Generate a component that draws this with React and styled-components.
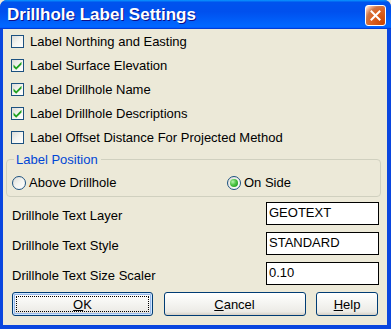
import React from "react";
import styled, { createGlobalStyle } from "styled-components";

const Global = createGlobalStyle`
  html, body { margin: 0; padding: 0; background: #ECE9D8; }
  body { font-family: "Liberation Sans", Arial, sans-serif; font-size: 13px; }
  * { box-sizing: border-box; }
`;

const Window = styled.div`
  width: 391px;
  height: 329px;
  display: flex;
  flex-direction: column;
  background: #0A46DF;
  padding: 0 4px 4px 3px;
  border-radius: 7px 7px 0 0;
  overflow: hidden;
`;

const TitleBar = styled.div`
  height: 29px;
  margin: 0 -4px 0 -3px;
  padding: 0 5px 0 7px;
  display: flex;
  align-items: center;
  justify-content: space-between;
  background: linear-gradient(180deg, #0997ff, #0053ee 8%, #0050ee 40%, #06f 88%, #06f 93%, #005bff 95%, #003dd7 96%, #003dd7);
`;

const Title = styled.div`
  color: #fff;
  font-family: "Liberation Sans", Arial, sans-serif;
  font-weight: bold;
  font-size: 17px;
  text-shadow: 1px 1px #0f1089;
  padding-top: 1px;
`;

const CloseButton = styled.div`
  width: 21px;
  height: 21px;
  border: 1px solid #fff;
  border-radius: 3px;
  background: radial-gradient(circle at 90% 90%, #cc4600 0%, #dc6527 55%, #cd7546 70%, #ffccb2 90%, #fff 100%);
  display: flex;
  align-items: center;
  justify-content: center;
  margin-top: 1px;
`;

const Client = styled.div`
  flex: 1;
  background: #ECE9D8;
  padding: 0 8px 0 8px;
  display: flex;
  flex-direction: column;
`;

const CheckRow = styled.label`
  height: 24px;
  display: flex;
  align-items: center;
  gap: 6px;
  color: #000;
  white-space: nowrap;
`;

const CheckBox = styled.span`
  width: 13px;
  height: 13px;
  border: 1px solid #1c5180;
  background: linear-gradient(135deg, #dcdcd7 0%, #f4f4f0 50%, #ffffff 100%);
  display: flex;
  align-items: center;
  justify-content: center;
  flex: none;
`;

const Group = styled.fieldset`
  margin: 3px -2px 0 -5px;
  padding: 2px 5px 0 5px;
  border: 1px solid #d0d0bf;
  border-radius: 4px;
  min-width: 0;
`;

const Legend = styled.legend`
  color: #0046d5;
  padding: 0 3px 0 2px;
  margin-left: 2px;
  line-height: 15px;
`;

const RadioRow = styled.div`
  height: 27px;
  display: flex;
  align-items: center;
`;

const RadioLabel = styled.label`
  display: flex;
  align-items: center;
  gap: 3px;
  width: ${(p) => (p.$width ? `${p.$width}px` : "auto")};
  flex: none;
  white-space: nowrap;
`;

const RadioCircle = styled.span`
  width: 14px;
  height: 14px;
  border-radius: 50%;
  border: 1px solid #1c5180;
  background: linear-gradient(135deg, #dcdcd7 0%, #f4f4f0 50%, #ffffff 100%);
  display: flex;
  align-items: center;
  justify-content: center;
  flex: none;
`;

const RadioDot = styled.span`
  width: 8px;
  height: 8px;
  border-radius: 50%;
  background: radial-gradient(circle at 35% 35%, #b8f5b0 0%, #55c84c 40%, #21a121 80%, #1a8a1a 100%);
`;

const FieldRow = styled.div`
  height: 23px;
  margin-top: ${(p) => p.$top}px;
  display: flex;
  align-items: center;
  justify-content: space-between;
  padding-left: 1px;
`;

const FieldLabel = styled.span`
  color: #000;
  padding-top: 3px;
`;

const TextBox = styled.div`
  width: 113px;
  height: 23px;
  border: 1px solid #000;
  background: #fff;
  padding: 1px 0 0 2px;
  color: #000;
  line-height: 17px;
`;

const ButtonRow = styled.div`
  margin-top: 7px;
  padding: 0 1px;
  display: flex;
  justify-content: space-between;
`;

const Button = styled.div`
  width: ${(p) => p.$width}px;
  height: 24px;
  border: 1px solid #003c74;
  border-radius: 3px;
  background: linear-gradient(180deg, #ffffff 0%, #f6f6f3 40%, #ecebe6 85%, #d6d0c5 100%);
  box-shadow: ${(p) =>
    p.$default ? "inset 0 0 0 1px #cee7ff, inset 0 0 0 2px #98b8ea" : "none"};
  display: flex;
  align-items: center;
  justify-content: center;
  color: #000;
  position: relative;
`;

const FocusRing = styled.span`
  position: absolute;
  inset: 3px;
  border: 1px dotted #000;
  border-radius: 1px;
  pointer-events: none;
`;

const U = styled.span`
  text-decoration: underline;
`;

const Check = () => (
  <svg width="11" height="11" viewBox="0 0 11 11">
    <path d="M1.5 4.5 L4.2 7.2 L9.5 1.8 L9.5 4.6 L4.2 9.8 L1.5 7.2 Z" fill="#21a121" />
  </svg>
);

const checks = [
  { label: "Label Northing and Easting", on: false },
  { label: "Label Surface Elevation", on: true },
  { label: "Label Drillhole Name", on: true },
  { label: "Label Drillhole Descriptions", on: true },
  { label: "Label Offset Distance For Projected Method", on: false },
];

const fields = [
  { label: "Drillhole Text Layer", value: "GEOTEXT" },
  { label: "Drillhole Text Style", value: "STANDARD" },
  { label: "Drillhole Text Size Scaler", value: "0.10" },
];

export default function App() {
  return (
    <>
      <Global />
      <Window>
        <TitleBar>
          <Title>Drillhole Label Settings</Title>
          <CloseButton>
            <svg width="11" height="11" viewBox="0 0 11 11">
              <path d="M1.5 1.5 L9.5 9.5 M9.5 1.5 L1.5 9.5" stroke="#fff" strokeWidth="2" strokeLinecap="square" />
            </svg>
          </CloseButton>
        </TitleBar>
        <Client>
          {checks.map((c) => (
            <CheckRow key={c.label}>
              <CheckBox>{c.on && <Check />}</CheckBox>
              {c.label}
            </CheckRow>
          ))}
          <Group>
            <Legend>Label Position</Legend>
            <RadioRow>
              <RadioLabel $width={215}>
                <RadioCircle />
                Above Drillhole
              </RadioLabel>
              <RadioLabel>
                <RadioCircle>
                  <RadioDot />
                </RadioCircle>
                On Side
              </RadioLabel>
            </RadioRow>
          </Group>
          {fields.map((f, i) => (
            <FieldRow key={f.label} $top={i === 0 ? 5 : 7}>
              <FieldLabel>{f.label}</FieldLabel>
              <TextBox>{f.value}</TextBox>
            </FieldRow>
          ))}
          <ButtonRow>
            <Button $width={141} $default>
              <FocusRing />
              <span>
                <U>O</U>K
              </span>
            </Button>
            <Button $width={142}>
              <span>
                <U>C</U>ancel
              </span>
            </Button>
            <Button $width={62}>
              <span>
                <U>H</U>elp
              </span>
            </Button>
          </ButtonRow>
        </Client>
      </Window>
    </>
  );
}
